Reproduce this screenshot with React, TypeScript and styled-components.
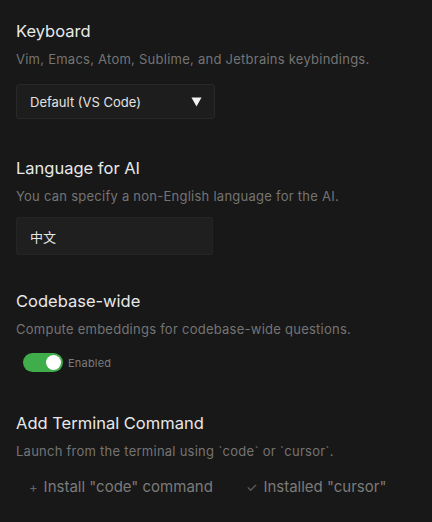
import styled, { createGlobalStyle } from 'styled-components'

// --------------------------------------------------------------------------------------------------------------
const GlobalStyle = createGlobalStyle`
  html, body {
    margin: 0;
    padding: 0;
    background: #181818;
  }
  body {
    font-family: "Inter", "Noto Sans CJK SC", sans-serif;
    -webkit-font-smoothing: antialiased;
  }
`

const Page = styled.div`
  display: flex;
  flex-direction: column;
  padding: 21px 16px 0 16px;
  height: 522px;
  box-sizing: border-box;
  overflow: hidden;
`

const Section = styled.section<{ $mt?: number }>`
  display: flex;
  flex-direction: column;
  align-items: flex-start;
  margin-top: ${(p) => p.$mt ?? 0}px;
`

const Title = styled.h2`
  margin: 0;
  font-size: 16.5px;
  line-height: 20px;
  font-weight: 400;
  color: #e8e8e8;
`

const Description = styled.p<{ $mb: number }>`
  margin: 10px 0 ${(p) => p.$mb}px 0;
  font-size: 13px;
  line-height: 16px;
  letter-spacing: 0.25px;
  color: #747474;
  white-space: nowrap;
`

const Select = styled.div`
  display: flex;
  align-items: center;
  justify-content: space-between;
  width: 199px;
  height: 35px;
  box-sizing: border-box;
  padding: 0 12px 0 13px;
  background: #1d1d1d;
  border: 1px solid #282828;
  border-radius: 3px;
  font-size: 13px;
  color: #e2e2e2;
`

const Caret = styled.svg`
  width: 11px;
  height: 10px;
`

const TextInput = styled.div`
  display: flex;
  align-items: center;
  width: 197px;
  height: 38px;
  box-sizing: border-box;
  padding: 0 13px;
  background: #1f1f1f;
  border: 1px solid #242424;
  border-radius: 2px;
  font-size: 13px;
  color: #e6e6e6;
`

const ToggleRow = styled.div`
  display: flex;
  align-items: center;
  gap: 5px;
  margin-left: 7px;
`

const Track = styled.div<{ $on: boolean }>`
  display: flex;
  align-items: center;
  justify-content: ${(p) => (p.$on ? 'flex-end' : 'flex-start')};
  width: 40px;
  height: 19px;
  padding: 0 2px;
  box-sizing: border-box;
  border-radius: 10px;
  background: ${(p) => (p.$on ? '#3fad4a' : '#3a3a3a')};
`

const Knob = styled.div`
  width: 15px;
  height: 15px;
  border-radius: 50%;
  background: #ffffff;
`

const ToggleLabel = styled.span`
  font-size: 11px;
  letter-spacing: 0.2px;
  color: #7c7c7c;
`

const ButtonRow = styled.div`
  display: flex;
  align-items: center;
  gap: 33px;
  margin-left: 13px;
`

const TextButton = styled.button`
  display: flex;
  align-items: center;
  gap: 6px;
  background: none;
  border: none;
  padding: 0;
  font-family: inherit;
  font-size: 15px;
  line-height: 20px;
  color: #7b7b7b;
  cursor: pointer;
`

const Glyph = styled.span`
  font-size: 13px;
  color: #666666;
`

// --------------------------------------------------------------------------------------------------------------

export default function App() {
  return (
    <>
      <GlobalStyle />
      <Page>
        <Section>
          <Title>Keyboard</Title>
          <Description $mb={17}>Vim, Emacs, Atom, Sublime, and Jetbrains keybindings.</Description>
          <Select>
            <span>Default (VS Code)</span>
            <Caret viewBox="0 0 11 10">
              <path d="M0.5 0.5 H10.5 L5.5 9.5 Z" fill="#f2f2f2" />
            </Caret>
          </Select>
        </Section>

        <Section $mt={39}>
          <Title>Language for AI</Title>
          <Description $mb={13}>You can specify a non-English language for the AI.</Description>
          <TextInput>中文</TextInput>
        </Section>

        <Section $mt={36}>
          <Title>Codebase-wide</Title>
          <Description $mb={16}>Compute embeddings for codebase-wide questions.</Description>
          <ToggleRow>
            <Track $on>
              <Knob />
            </Track>
            <ToggleLabel>Enabled</ToggleLabel>
          </ToggleRow>
        </Section>

        <Section $mt={41}>
          <Title>Add Terminal Command</Title>
          <Description $mb={18}>Launch from the terminal using `code` or `cursor`.</Description>
          <ButtonRow>
            <TextButton>
              <Glyph>+</Glyph>
              Install "code" command
            </TextButton>
            <TextButton>
              <Glyph>✓</Glyph>
              Installed "cursor"
            </TextButton>
          </ButtonRow>
        </Section>
      </Page>
    </>
  )
}
